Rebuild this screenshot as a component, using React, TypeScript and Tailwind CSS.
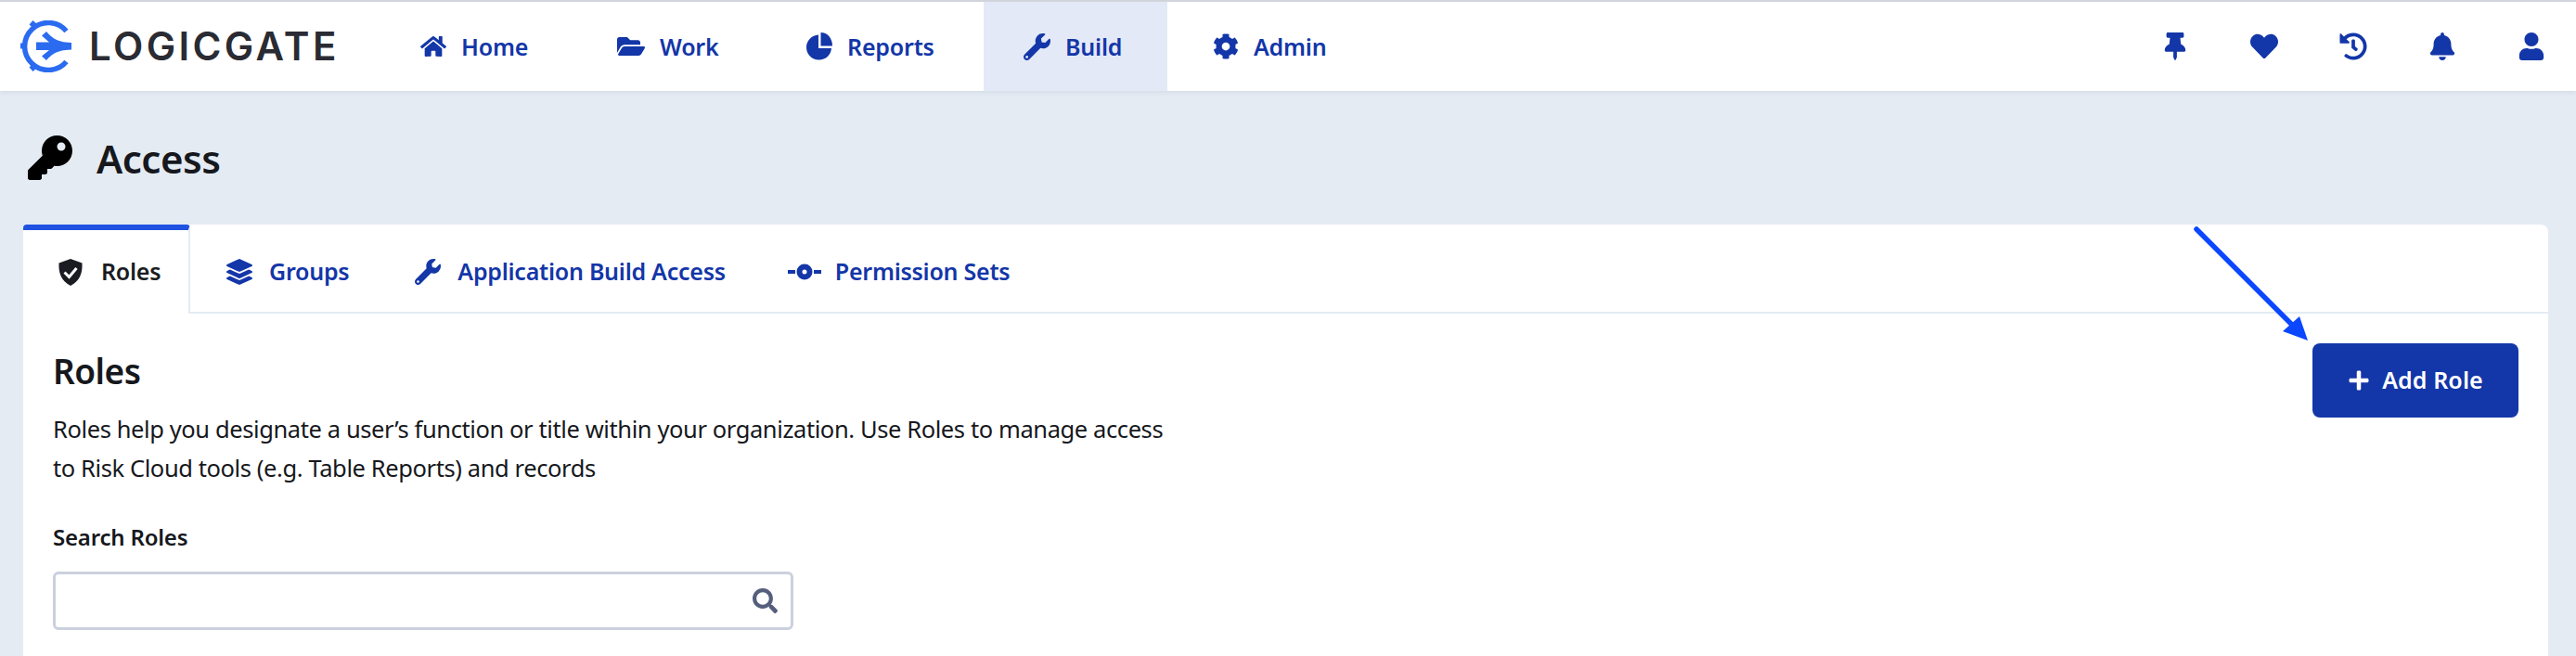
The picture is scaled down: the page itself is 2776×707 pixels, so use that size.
import { FaBell, FaCog, FaFolderOpen, FaHeart, FaHistory, FaHome, FaKey, FaLayerGroup, FaPlus, FaSearch, FaThumbtack, FaUser, FaWrench } from "react-icons/fa";
import type { IconType } from "react-icons";
import type { ReactNode } from "react";

const FONT = "font-['Noto_Sans','Open_Sans',sans-serif]";

type NavItem = { label: string; icon: ReactNode; className: string };

function PieIcon() {
  return (
    <svg width="28" height="30" viewBox="0 0 28 30">
      <path d="M13 2.500V17h14c-.5 7-6 12.500-13.500 12.500C5.800 29.500 0 23.500 0 16 0 8.800 5.800 3 13 2.500z" fill="#1336a8" />
      <path d="M15.500 0C22.500 0 28 6 28 14.500H15.500z" fill="#1336a8" />
    </svg>
  );
}

const NAV_ITEMS: NavItem[] = [
  { label: "Home", icon: <FaHome className="text-[28px]" />, className: "w-[212px] pl-[43px]" },
  { label: "Work", icon: <FaFolderOpen className="text-[30px]" />, className: "w-[204px] pl-[43px]" },
  { label: "Reports", icon: <PieIcon />, className: "w-[234px] pl-[43px]" },
  { label: "Build", icon: <FaWrench className="text-[29px]" />, className: "w-[198px] bg-[#e3e9f6] pl-[43px]" },
  { label: "Admin", icon: <FaCog className="text-[28px]" />, className: "w-[216px] pl-[49px]" },
];

const UTILITY_ICONS: IconType[] = [FaThumbtack, FaHeart, FaHistory, FaBell, FaUser];

function Logo() {
  return (
    <div className="flex w-[410px] shrink-0 items-center pl-[22px]">
      <svg width="58" height="56" viewBox="0 0 58 56" fill="none" className="shrink-0">
        <path d="M49.500 11.500A25.500 25.500 0 1 0 49.500 44.500" stroke="#2b6bf0" strokeWidth="5.500" />
        <path d="M0 24.500h6v6H0zM13.500 0l5.500 5-4 4.500-5.500-5zM13.500 55l5.500-5-4-4.500-5.500 5z" fill="#2b6bf0" />
        <path d="M17 23.500H31L23 16.500L28 12C33 17 37 23.500 55 24V31.500C37 32 33 38 28 43L23 38.500L31 32H17Z" fill="#2b6bf0" />
      </svg>
      <span className="ml-[16px] font-['Inter',sans-serif] text-[42px] leading-none font-semibold tracking-[3.4px] text-[#2a2b33]">
        LOGICGATE
      </span>
    </div>
  );
}

function ShieldCheck() {
  return (
    <svg width="26" height="29" viewBox="0 0 26 29" className="shrink-0">
      <path d="M13 0l12.500 4.500c.5 10-2 19-12.500 24.500C2.500 23.500 0 14.500.5 4.500z" fill="#1a1c22" />
      <path d="M6.500 14.500l5 5 8-9.500" stroke="#fff" strokeWidth="3" fill="none" />
    </svg>
  );
}

function PermissionIcon() {
  return (
    <svg width="36" height="18" viewBox="0 0 36 18" className="shrink-0">
      <path d="M0 7h8v4H0zM28 7h8v4h-8z" fill="#1336a8" />
      <circle cx="18" cy="9" r="5.500" fill="none" stroke="#1336a8" strokeWidth="6" />
    </svg>
  );
}

function Arrow() {
  return (
    <svg className="pointer-events-none absolute top-0 left-0" width="2776" height="707" viewBox="0 0 2776 707">
      <path d="M2367 247L2472 352" stroke="#0a47ff" strokeWidth="5.500" strokeLinecap="round" />
      <path d="M2487 367L2460 357L2478 341Z" fill="#0a47ff" />
    </svg>
  );
}

export default function App() {
  return (
    <div className={`relative flex h-[707px] w-[2776px] flex-col overflow-hidden bg-[#e4ebf3] ${FONT}`}>
      <header className="flex h-[98px] shrink-0 items-stretch border-t-2 border-[#d1d5db] bg-white shadow-[0_2px_5px_rgba(40,60,100,0.08)]">
        <Logo />
        <nav className="flex items-stretch">
          {NAV_ITEMS.map(({ label, icon, className }) => (
            <a
              key={label}
              className={`flex items-center gap-[16px] text-[25px] font-semibold tracking-[-0.2px] text-[#1336a8] ${className}`}
            >
              {icon}
              <span className="pt-[2px]">{label}</span>
            </a>
          ))}
        </nav>
        <div className="ml-auto flex items-center">
          {UTILITY_ICONS.map((Icon, i) => (
            <span key={i} className="flex w-[96px] justify-center">
              <Icon className="text-[30px] text-[#1336a8]" />
            </span>
          ))}
        </div>
      </header>

      <div className="flex h-[144px] shrink-0 items-center gap-[26px] pl-[30px]">
        <FaKey className="text-[48px] text-black" />
        <h1 className="text-[42px] font-semibold tracking-[-0.5px] text-[#16181d]">Access</h1>
      </div>

      <main className="mr-[30px] ml-[25px] flex flex-1 flex-col rounded-t-lg bg-white">
        <div className="flex h-[96px] shrink-0 items-stretch border-b-2 border-[#e4ebf3] text-[25px] font-semibold tracking-[-0.25px] text-[#1336a8]">
          <div className="-mb-[2px] flex w-[180px] items-center gap-[20px] rounded-t border-t-[6px] border-r-2 border-t-[#1f52e0] border-r-[#e4ebf3] bg-white pl-[38px] text-[#1a1c22]">
            <ShieldCheck />
            Roles
          </div>
          <div className="ml-[39px] flex items-center gap-[18px] pt-[8px]">
            <FaLayerGroup className="text-[28px]" />
            Groups
          </div>
          <div className="ml-[71px] flex items-center gap-[18px] pt-[8px]">
            <FaWrench className="text-[28px]" />
            Application Build Access
          </div>
          <div className="ml-[67px] flex items-center gap-[15px] pt-[8px]">
            <PermissionIcon />
            Permission Sets
          </div>
        </div>

        <section className="flex items-start justify-between p-8">
          <div>
            <h2 className="mt-[8px] text-[37px] leading-[44px] font-semibold tracking-[-0.5px] text-[#16181d]">Roles</h2>
            <p className="mt-[19px] text-[25.500px] leading-[42px] tracking-[-0.4px] text-[#16181d]">
              Roles help you designate a user’s function or title within your organization. Use Roles to manage access
              <br />
              to Risk Cloud tools (e.g. Table Reports) and records
            </p>
            <label className="mt-[38px] block text-[24px] leading-[32px] font-semibold tracking-[-0.2px] text-[#16181d]">Search Roles</label>
            <div className="mt-[21px] flex h-[63px] w-[798px] items-center justify-end rounded-md border-[3px] border-[#cbd0de] pr-[14px]">
              <FaSearch className="text-[27px] text-[#555f7c]" />
            </div>
          </div>
          <button className="flex h-[80px] w-[222px] items-center justify-center gap-[13px] rounded-lg bg-[#1336a8] text-[25px] font-semibold tracking-[0.1px] text-white">
            <FaPlus className="text-[24px]" />
            Add Role
          </button>
        </section>
      </main>
      <Arrow />
    </div>
  );
}
